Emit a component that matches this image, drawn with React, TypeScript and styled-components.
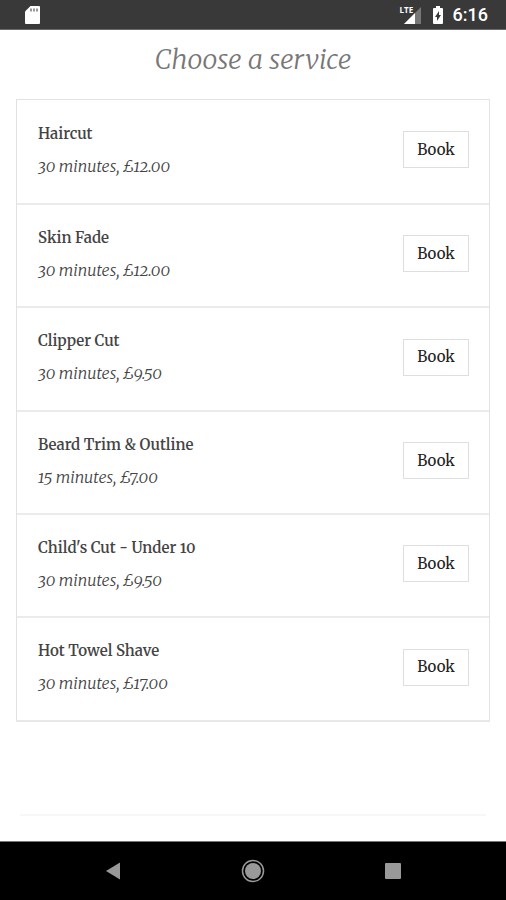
import React from "react";
import styled, { createGlobalStyle } from "styled-components";

const serif = `Merriweather, "Liberation Serif", "DejaVu Serif", serif`;

const GlobalStyle = createGlobalStyle`
  * { box-sizing: border-box; }
  body { margin: 0; background: #fff; }
`;

const Screen = styled.div`
  min-height: 100vh;
  display: flex;
  flex-direction: column;
  font-family: ${serif};
  font-variant-numeric: oldstyle-nums proportional-nums;
`;

const StatusBar = styled.header`
  height: 30px;
  padding: 0 18px 0 24px;
  display: flex;
  align-items: center;
  justify-content: space-between;
  background: #393939;
  border-bottom: 1px solid #6a6a6a;
  color: #fff;
  font: 500 18px/30px Roboto, sans-serif;
`;

const StatusIcons = styled.div`
  display: flex;
  align-items: center;
  gap: 9px;
`;

const Signal = styled.div`
  position: relative;
`;

const NetworkType = styled.span`
  position: absolute;
  top: 0;
  left: -3px;
  font-family: "Open Sans", sans-serif;
  font-size: 8px;
  line-height: 10px;
  font-weight: 700;
`;

const Icon = styled.svg`
  display: block;
`;

const Main = styled.main`
  flex: 1;
  padding: 8px 16px 0;
  display: flex;
  flex-direction: column;
`;

const Title = styled.h1`
  margin: 0 0 19px;
  text-align: center;
  font-size: 27px;
  line-height: 42px;
  font-style: italic;
  font-weight: 300;
  color: #777;
`;

const ServiceList = styled.ul`
  margin: 0;
  padding: 0;
  list-style: none;
  border: 1px solid #e2e2e2;
  border-bottom: 2px solid #e8e8e8;
`;

const ServiceRow = styled.li`
  min-height: 103px;
  padding: 0 20px 4px 21px;
  display: flex;
  align-items: center;
  justify-content: space-between;

  & + & {
    border-top: 2px solid #ebebeb;
  }

  &:nth-child(3n) {
    min-height: 104px;
  }
`;

const ServiceName = styled.h2`
  margin: 0 0 8px;
  font-size: 15px;
  line-height: 24px;
  font-weight: 600;
  color: #444;
`;

const ServiceDetail = styled.p`
  margin: 0;
  font-size: 16px;
  line-height: 24px;
  font-style: italic;
  font-weight: 300;
  color: #444;
`;

const BookButton = styled.button`
  width: 66px;
  height: 37px;
  padding: 0;
  border: 1px solid #dedede;
  background: #fff;
  color: #222;
  font: 400 15px/24px ${serif};
`;

const Divider = styled.hr`
  width: auto;
  align-self: stretch;
  margin: auto 4px 25px;
  border: 0;
  border-top: 2px solid #f7f7f7;
`;

const NavBar = styled.nav`
  height: 59px;
  border-top: 1px solid #777;
  background: #000;
  display: flex;
  align-items: center;
  justify-content: center;
  gap: 100px;
`;

const NavButton = styled.button`
  width: 40px;
  height: 40px;
  padding: 0;
  border: 0;
  background: none;
  display: grid;
  place-items: center;
`;

const services = [
  { name: "Haircut", detail: "30 minutes, £12.00" },
  { name: "Skin Fade", detail: "30 minutes, £12.00" },
  { name: "Clipper Cut", detail: "30 minutes, £9.50" },
  { name: "Beard Trim & Outline", detail: "15 minutes, £7.00" },
  { name: "Child's Cut - Under 10", detail: "30 minutes, £9.50" },
  { name: "Hot Towel Shave", detail: "30 minutes, £17.00" },
];

export default function App() {
  return (
    <Screen>
      <GlobalStyle />
      <StatusBar>
        <Icon width="17" height="20" viewBox="0 0 17 20" aria-hidden="true">
          <path d="M6.5 1H15q1 0 1 1v16q0 1-1 1H2q-1 0-1-1V6.500z" fill="#fff" />
          <path d="M7 3.500v3M10 3.500v3M13 3.500v3" stroke="#777" strokeWidth="1.500" />
        </Icon>
        <StatusIcons>
          <Signal>
            <Icon width="20" height="20" viewBox="0 0 20 20" aria-hidden="true">
              <path d="M18 2v17H1z" fill="#777" />
              <path d="M12 8v11H1z" fill="#fff" />
            </Icon>
            <NetworkType>LTE</NetworkType>
          </Signal>
          <Icon width="12" height="20" viewBox="0 0 12 20" aria-hidden="true">
            <path d="M4 1h4v2h2q1 0 1 1v14q0 1-1 1H2q-1 0-1-1V4q0-1 1-1h2z" fill="#fff" />
            <path d="M7 6v4h2l-4 6v-4H3z" fill="#393939" />
          </Icon>
          <span>6:16</span>
        </StatusIcons>
      </StatusBar>
      <Main>
        <Title>Choose a service</Title>
        <ServiceList>
          {services.map((service) => (
            <ServiceRow key={service.name}>
              <div>
                <ServiceName>{service.name}</ServiceName>
                <ServiceDetail>{service.detail}</ServiceDetail>
              </div>
              <BookButton type="button" aria-label={"Book " + service.name}>Book</BookButton>
            </ServiceRow>
          ))}
        </ServiceList>
        <Divider />
      </Main>
      <NavBar>
        <NavButton type="button" aria-label="Back">
          <Icon width="16" height="20" viewBox="0 0 16 20"><path d="M15 1.500v17L1 10z" fill="#999" /></Icon>
        </NavButton>
        <NavButton type="button" aria-label="Home">
          <Icon width="24" height="24" viewBox="0 0 24 24">
            <circle cx="12" cy="12" r="8" fill="#999" />
            <circle cx="12" cy="12" r="10.500" fill="none" stroke="#999" strokeWidth="1.500" />
          </Icon>
        </NavButton>
        <NavButton type="button" aria-label="Overview">
          <Icon width="16" height="16" viewBox="0 0 16 16"><rect width="16" height="16" rx="1" fill="#999" /></Icon>
        </NavButton>
      </NavBar>
    </Screen>
  );
}
